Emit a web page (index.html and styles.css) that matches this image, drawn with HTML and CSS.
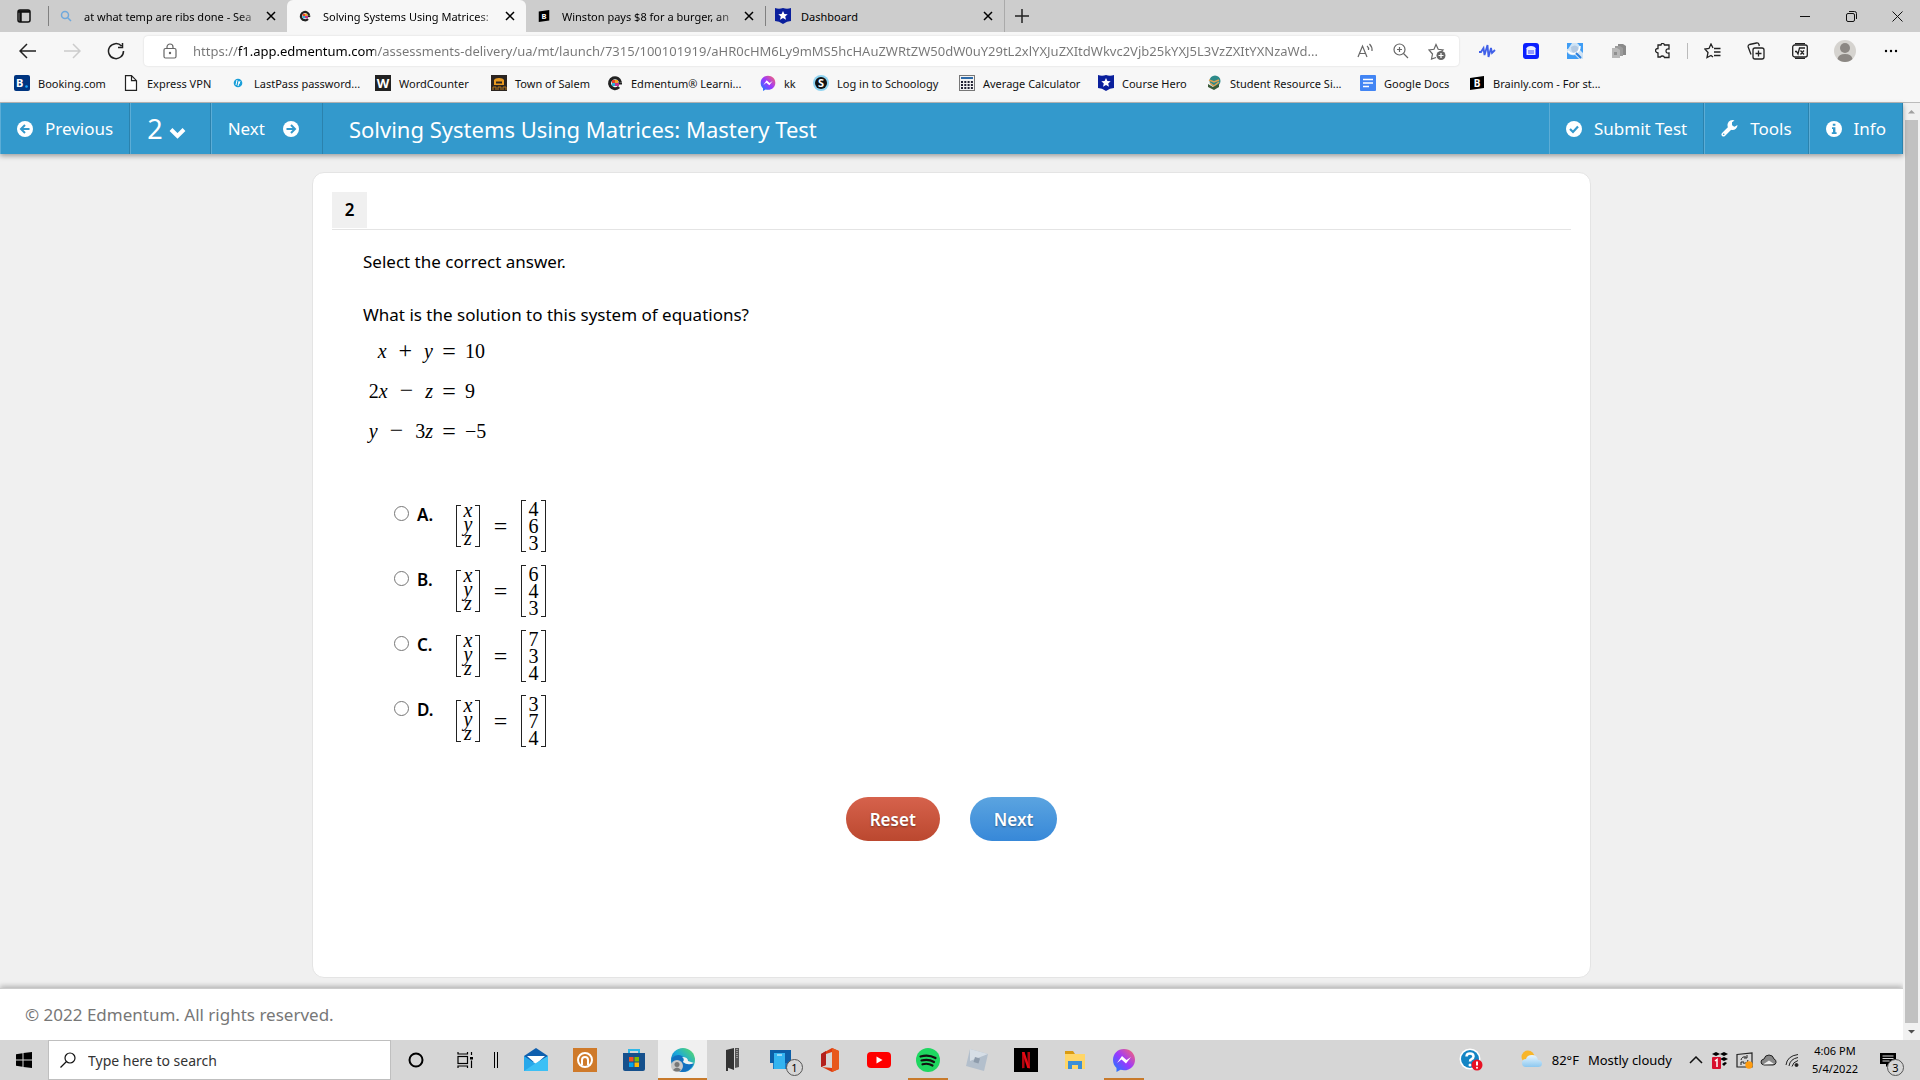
FILE: index.html
```
<!DOCTYPE html>
<html lang="en">
<head>
  <meta charset="UTF-8" />
  <meta name="viewport" content="width=device-width, initial-scale=1.0"/>
  <title>Solving Systems Using Matrices: Mastery Test</title>
  <link rel="stylesheet" href="styles.css">
</head>
<body>
  <!-- Shared icons -->
  <svg class="sprite" aria-hidden="true">
    <symbol id="i-close" viewBox="0 0 12 12"><path d="M2 2l8 8M10 2l-8 8" stroke="currentColor" stroke-width="1.5" fill="none"/></symbol>
    <symbol id="i-edmentum" viewBox="0 0 16 16">
      <path d="M13.500 7.500a5.500 5.500 0 1 0-1.500 4.500" fill="none" stroke="#222" stroke-width="3"/>
      <path d="M5 8.500h10" stroke="#222" stroke-width="2"/>
      <path d="M5 5h3v3H5z" fill="#e8432e"/><path d="M8 5h3v3H8z" fill="#f5a623"/><path d="M5 8h3v3H5z" fill="#2bb3d6"/><path d="M8 8h4v3H8z" fill="#c2378f"/>
    </symbol>
    <symbol id="i-hero" viewBox="0 0 16 16"><path d="M0 0q4 1.500 8 0 4 1.500 8 0v13q-4 0-8 3-4-3-8-3z" fill="#0a1f9c"/><path d="M8 3l1.400 3 3.300.3-2.500 2.200.8 3.300L8 10l-3 1.800.8-3.300-2.500-2.200 3.300-.3z" fill="#fff"/></symbol>
    <symbol id="i-messenger" viewBox="0 0 24 24">
      <path d="M12 1C5.500 1 1 5.800 1 12c0 3.300 1.300 6 3.500 7.900V24l4-2.200c1.100.3 2.300.5 3.500.5 6.500 0 11-4.600 11-10.600S18.500 1 12 1z" fill="url(#g-msg)"/>
      <path d="M5 15l5-7 4.500 4L19 9l-5 6.500-4.500-4z" fill="#fff"/>
    </symbol>
    <defs>
      <linearGradient id="g-msg" x1="0" y1="1" x2="1" y2="0"><stop offset="0" stop-color="#0a84ff"/><stop offset=".5" stop-color="#9b38ff"/><stop offset="1" stop-color="#ff6968"/></linearGradient>
      <linearGradient id="g-edge" x1="0" y1="1" x2="1" y2="0"><stop offset="0" stop-color="#0c59a4"/><stop offset=".5" stop-color="#1ba8dc"/><stop offset="1" stop-color="#5fe05a"/></linearGradient>
      <linearGradient id="g-cloud" x1="0" y1="0" x2="0" y2="1"><stop offset="0" stop-color="#e9f6ff"/><stop offset="1" stop-color="#8cc8f0"/></linearGradient>
    </defs>
  </svg>

  <!-- Browser tabs -->
  <div class="tabstrip">
    <button class="tab-actions" aria-label="Tab actions"><svg width="16" height="16" viewBox="0 0 16 16"><rect x="2" y="2" width="12" height="12" rx="2" fill="none" stroke="#111" stroke-width="1.500"/><path d="M2 3.500h12M4.500 3v11" stroke="#111" stroke-width="2.500"/></svg></button>
    <div class="tab tab-line">
      <svg class="tab-icon" viewBox="0 0 12 12"><circle cx="5" cy="5" r="3.500" fill="none" stroke="#6fa8dc" stroke-width="1.500"/><path d="M7.500 7.500L11 11" stroke="#6fa8dc" stroke-width="1.500"/></svg>
      <span class="tab-title faded">at what temp are ribs done - Sea</span>
      <button class="tab-close" aria-label="Close tab"><svg width="12" height="12"><use href="#i-close"/></svg></button>
    </div>
    <div class="tab active">
      <svg class="tab-icon"><use href="#i-edmentum"/></svg>
      <span class="tab-title faded">Solving Systems Using Matrices:</span>
      <button class="tab-close" aria-label="Close tab"><svg width="12" height="12"><use href="#i-close"/></svg></button>
    </div>
    <div class="tab">
      <svg class="tab-icon" viewBox="0 0 16 16"><path d="M1 2l14-2v14L1 16z" fill="#000"/><text x="8" y="12" font-size="10" font-weight="700" text-anchor="middle" fill="#fff">B</text></svg>
      <span class="tab-title faded">Winston pays $8 for a burger, an</span>
      <button class="tab-close" aria-label="Close tab"><svg width="12" height="12"><use href="#i-close"/></svg></button>
    </div>
    <div class="tab tab-line">
      <svg class="tab-icon big"><use href="#i-hero"/></svg>
      <span class="tab-title">Dashboard</span>
      <button class="tab-close" aria-label="Close tab"><svg width="12" height="12"><use href="#i-close"/></svg></button>
    </div>
    <button class="new-tab" aria-label="New tab"><svg width="14" height="14" viewBox="0 0 14 14"><path d="M7 0v14M0 7h14" stroke="#222" stroke-width="1.500"/></svg></button>
    <div class="window-controls">
      <button aria-label="Minimize"><svg width="10" height="10" viewBox="0 0 10 10"><path d="M0 5.500h10" stroke="#111"/></svg></button>
      <button aria-label="Restore"><svg width="11" height="11" viewBox="0 0 11 11" fill="none" stroke="#111"><rect x=".5" y="2.500" width="8" height="8" rx="1.500"/><path d="M3 .5h5.500q2 0 2 2V8"/></svg></button>
      <button aria-label="Close"><svg width="11" height="11" viewBox="0 0 11 11"><path d="M.5.500l10 10M10.500.500l-10 10" stroke="#111"/></svg></button>
    </div>
  </div>

  <!-- Address bar -->
  <div class="toolbar">
    <div class="nav-buttons">
      <button aria-label="Back"><svg width="18" height="16" viewBox="0 0 18 16" fill="none" stroke="#222" stroke-width="1.500"><path d="M17 8H1.500M8 1L1 8l7 7"/></svg></button>
      <button aria-label="Forward" disabled><svg width="18" height="16" viewBox="0 0 18 16" fill="none" stroke="#ccc" stroke-width="1.500"><path d="M1 8h15.500M10 1l7 7-7 7"/></svg></button>
      <button aria-label="Refresh"><svg width="18" height="18" viewBox="0 0 18 18" fill="none" stroke="#222" stroke-width="1.500"><path d="M16.500 9A7.500 7.500 0 1 1 14.500 4M15.500 1v4.500H11"/></svg></button>
    </div>
    <div class="address">
      <svg width="14" height="16" viewBox="0 0 14 16" fill="none" stroke="#666" stroke-width="1.200"><rect x="1" y="5.500" width="12" height="9.500" rx="1.500"/><path d="M4 5.500V4a3 3 0 0 1 6 0v1.500"/><circle cx="7" cy="10" r=".6" fill="#666"/></svg>
      <input class="url" type="text" aria-label="Address" value="https://f1.app.edmentum.com/assessments-delivery/ua/mt/launch/7315/100101919/aHR0cHM6Ly9mMS5hcHAuZWRtZW50dW0uY29tL2xlYXJuZXItdWkvc2Vjb25kYXJ5L3VzZXItYXNzaWd...">
      <div class="address-icons">
        <button aria-label="Read aloud"><svg width="17" height="16" viewBox="0 0 17 16" fill="none" stroke="#666" stroke-width="1.200"><path d="M1 14L5.500 3 10 14M2.500 10.500h6M10 3q2 1.500 1.500 4M12.500 1q3 3 2.500 7"/></svg></button>
        <button aria-label="Zoom"><svg width="16" height="16" viewBox="0 0 16 16" fill="none" stroke="#666" stroke-width="1.200"><circle cx="6.500" cy="6.500" r="5.500"/><path d="M10.500 10.500L15 15M4 6.500h5M6.500 4v5"/></svg></button>
        <button aria-label="Add to favorites"><svg width="18" height="17" viewBox="0 0 18 17" fill="none" stroke="#666" stroke-width="1.200"><path d="M8 14.500l-4.500 1.500 1-5L1 7l5-.7L8 1.500l2.200 4.800 4.800.7-2 2"/><circle cx="13" cy="12.500" r="4.500" fill="#666" stroke="none"/><path d="M13 10v5M10.500 12.500h5" stroke="#fff"/></svg></button>
      </div>
    </div>
    <div class="extensions">
      <button aria-label="Speechify"><svg width="18" height="16" viewBox="0 0 18 16"><path d="M1 9h2L5.500 5l1 7L9.500 2l1 12 2.500-9 1 5 3-3" fill="none" stroke="#4060e8" stroke-width="1.800"/></svg></button>
      <button aria-label="Honey"><svg width="16" height="16" viewBox="0 0 16 16"><rect width="16" height="16" rx="3" fill="#0a20ff"/><path d="M3 6q1-3 5-3t5 3zM3.500 6h9v6h-9z" fill="#e8ecff"/><path d="M6 7v4M8 7v4M10 7v4" stroke="#0a20ff" stroke-width=".8"/></svg></button>
      <button aria-label="Extension"><svg width="16" height="16" viewBox="0 0 16 16"><path d="M0 0h16v16H0z" fill="#cfe3f5"/><path d="M0 0h5L1 6H0zM10 0h6v10l-3-3q1-4-3-7zM0 9q3 4 8 3l4 4H0z" fill="#3f9df5"/><path d="M4 4q4-3 7 0 1 5-3 6-4 0-4-6z" fill="#b3c9e2"/><path d="M1 8q3 4 8 2 4-2 4-7" fill="none" stroke="#fff" stroke-width="1.500"/><path d="M9 10l5 5" stroke="#2b7fdc" stroke-width="2"/></svg></button>
      <button aria-label="Documents"><svg width="16" height="16" viewBox="0 0 16 16"><path d="M7 1h5l3 2v9H7z" fill="#8a8a8a"/><path d="M4 3h5l3 2v8H4z" fill="#9c9c9c"/><path d="M1 5h5l3 2v8H1z" fill="#b8b8b8"/><path d="M3 9h3v3H3z" fill="#909090"/></svg></button>
      <button aria-label="Extensions"><svg width="16" height="16" viewBox="0 0 16 16" fill="none" stroke="#222" stroke-width="1.300"><path d="M3 2h3q.5-2 2-1.500T9.500 2H14v4q-3-.5-3 2t3 2v4.500H9.500q-.5-1.500-2-1.500T5.500 14H3v-4Q.5 9.500.5 7.500T3 5.500z"/></svg></button>
      <span class="divider"></span>
      <button aria-label="Favorites"><svg width="17" height="16" viewBox="0 0 17 16" fill="none" stroke="#222" stroke-width="1.300"><path d="M9 5L7 1 5 5.500.8 6 4 9.500 3 14.500 7 12.500 9 14M10 5.500h6.500M10 9h6.500M10 12.500h6.500"/></svg></button>
      <button aria-label="Collections"><svg width="18" height="18" viewBox="0 0 18 18" fill="none" stroke="#222" stroke-width="1.300"><rect x="6" y="6" width="11" height="11" rx="2"/><path d="M11.500 8.500v6M8.500 11.500h6M4 12.500L1.200 5Q.8 3 2.500 2.500L9.500 1q2-.3 2.500 1.500l.3 1.500"/></svg></button>
      <button aria-label="Math solver"><svg width="16" height="16" viewBox="0 0 16 16" fill="none" stroke="#222" stroke-width="1.300"><rect x=".7" y="2" width="14.600" height="12" rx="2"/><path d="M3 .7h10M3 15.300h10M3 8.500h1.500L6 11l1.500-6H13M8.500 7.500l3.500 4M12 7.500l-3.500 4"/></svg></button>
      <button class="wide" aria-label="Profile"><svg width="22" height="22" viewBox="0 0 22 22"><circle cx="11" cy="11" r="11" fill="#d5d3cf"/><circle cx="11" cy="8" r="5" fill="#8c8884"/><path d="M3.500 19q1-5 7.500-5t7.500 5q-3 3-7.500 3t-7.500-3z" fill="#8c8884"/></svg></button>
      <button class="wide" aria-label="Settings and more"><svg width="14" height="4" viewBox="0 0 14 4"><circle cx="2" cy="2" r="1.200"/><circle cx="7" cy="2" r="1.200"/><circle cx="12" cy="2" r="1.200"/></svg></button>
    </div>
  </div>

  <!-- Favorites bar -->
  <nav class="bookmarks">
    <a href="#"><svg viewBox="0 0 16 16"><rect width="16" height="16" rx="2" fill="#003580"/><text x="2" y="12" font-size="11" font-weight="700" fill="#fff">B</text><circle cx="12.500" cy="11.500" r="1.300" fill="#19a7ff"/></svg>Booking.com</a>
    <a href="#"><svg viewBox="0 0 16 16"><path d="M2.500.7h6l5 5v9.600h-11zM8.500.7v5h5" fill="#fff" stroke="#222" stroke-width="1.200"/></svg>Express VPN</a>
    <a href="#"><svg viewBox="0 0 16 16"><circle cx="8" cy="8" r="4.300" fill="#1a9fd9"/><path d="M7 5L6 10M8 7h1l-1 4M10 6L9 9" stroke="#fff" fill="none"/></svg>LastPass password...</a>
    <a href="#"><svg viewBox="0 0 16 16"><rect width="16" height="16" fill="#222"/><text x="8" y="13" font-size="13" font-weight="700" text-anchor="middle" fill="#fff">W</text></svg>WordCounter</a>
    <a href="#"><svg viewBox="0 0 16 16"><rect width="16" height="16" fill="#2b2420"/><path d="M3 5q1-2 5-2t5 2v5H3z" fill="#e89a22"/><path d="M5 6.500h6v2H5z" fill="#2b2420"/><path d="M2 15v-3h3v3M7 15v-3h3v3M12 15v-3h3v3" stroke="#b5761c" fill="none"/></svg>Town of Salem</a>
    <a href="#"><svg><use href="#i-edmentum"/></svg>Edmentum® Learni...</a>
    <a href="#"><svg><use href="#i-messenger"/></svg>kk</a>
    <a href="#"><svg viewBox="0 0 16 16"><circle cx="8" cy="8" r="8" fill="#8fd4f2"/><circle cx="8" cy="8" r="6" fill="#111"/><text x="8" y="12" font-size="11" font-weight="700" text-anchor="middle" fill="#fff">S</text></svg>Log in to Schoology</a>
    <a href="#"><svg viewBox="0 0 16 16"><rect x=".5" y=".5" width="15" height="15" fill="#f2f2f2" stroke="#777"/><path d="M2 3h12" stroke="#2d6aa8" stroke-width="2"/><path d="M2 7h12M2 10h12M2 13h12" stroke="#223" stroke-width="2" stroke-dasharray="2 1.300"/></svg>Average Calculator</a>
    <a href="#"><svg><use href="#i-hero"/></svg>Course Hero</a>
    <a href="#"><svg viewBox="0 0 16 16"><circle cx="9" cy="6" r="5.500" fill="#2d8a8a"/><path d="M3 5l5 2 5-2M4 8l4 3 5-4" stroke="#e0a050" stroke-width="1.500" fill="none"/><path d="M2 9l5 3 6-3v3l-5 3-6-3z" fill="#3a5a38"/></svg>Student Resource Si...</a>
    <a href="#"><svg viewBox="0 0 16 16"><rect width="16" height="16" rx="1" fill="#4285f4"/><path d="M3 4.500h10M3 8h10M3 11.500h6" stroke="#fff" stroke-width="1.500"/></svg>Google Docs</a>
    <a href="#"><svg viewBox="0 0 16 16"><path d="M1 3l14-2v12L1 15z" fill="#000"/><text x="8" y="12" font-size="10" font-weight="700" text-anchor="middle" fill="#fff">B</text></svg>Brainly.com - For st...</a>
  </nav>

  <!-- Test page -->
  <div class="viewport">
    <div class="page">
      <header class="test-bar">
        <button class="bar-btn"><svg width="16" height="16" viewBox="0 0 16 16"><circle cx="8" cy="8" r="8" fill="#fff"/><path d="M12.500 8H4.500M8 4L4 8l4 4" fill="none" stroke="#39c" stroke-width="2"/></svg>Previous</button>
        <button class="bar-btn question-menu">2<svg width="17" height="12" viewBox="0 0 17 12"><path d="M2 2.500l6.500 6.500L15 2.500" fill="none" stroke="#fff" stroke-width="4"/></svg></button>
        <button class="bar-btn next-btn">Next<svg width="16" height="16" viewBox="0 0 16 16"><circle cx="8" cy="8" r="8" fill="#fff"/><path d="M3.500 8h8M8 4l4 4-4 4" fill="none" stroke="#39c" stroke-width="2"/></svg></button>
        <h1>Solving Systems Using Matrices: Mastery Test</h1>
        <button class="bar-btn"><svg width="16" height="16" viewBox="0 0 16 16"><circle cx="8" cy="8" r="8" fill="#fff"/><path d="M4 8l3 3 5-5.500" fill="none" stroke="#39c" stroke-width="2.200"/></svg>Submit Test</button>
        <button class="bar-btn"><svg width="17" height="17" viewBox="0 0 17 17"><path d="M2.500 14.500L10 7" stroke="#fff" stroke-width="4" stroke-linecap="round"/><path d="M13.500.500a5 5 0 1 0 3 4.500l-3 1.800-2.500-1.300V2.200z" fill="#fff"/><circle cx="2.700" cy="14.300" r=".8" fill="#39c"/></svg>Tools</button>
        <button class="bar-btn"><svg width="16" height="16" viewBox="0 0 16 16"><circle cx="8" cy="8" r="8" fill="#fff"/><path d="M6.800 2.800h2.600v2H6.800zM6 6.300h3.400v5h1.200v1.700H5.800v-1.700H7V8H6z" fill="#39c"/></svg>Info</button>
      </header>

      <main>
        <form class="card">
          <div class="card-head"><span class="number">2</span></div>
          <div class="question">
            <p class="direction">Select the correct answer.</p>
            <p>What is the solution to this system of equations?</p>
            <div class="equations">
              <span class="lhs"><i>x</i><b>+</b><i>y</i></span><span class="eq">=</span><span>10</span>
              <span class="lhs">2<i>x</i><b>−</b><i>z</i></span><span class="eq">=</span><span>9</span>
              <span class="lhs"><i>y</i><b>−</b>3<i>z</i></span><span class="eq">=</span><span>−5</span>
            </div>
            <div class="options">
              <label class="option"><input type="radio" name="answer" value="A"><span class="letter">A.</span>
                <span class="math"><span class="matrix vars"><i>x</i><i>y</i><i>z</i></span><span class="eq">=</span><span class="matrix"><span>4</span><span>6</span><span>3</span></span></span></label>
              <label class="option"><input type="radio" name="answer" value="B"><span class="letter">B.</span>
                <span class="math"><span class="matrix vars"><i>x</i><i>y</i><i>z</i></span><span class="eq">=</span><span class="matrix"><span>6</span><span>4</span><span>3</span></span></span></label>
              <label class="option"><input type="radio" name="answer" value="C"><span class="letter">C.</span>
                <span class="math"><span class="matrix vars"><i>x</i><i>y</i><i>z</i></span><span class="eq">=</span><span class="matrix"><span>7</span><span>3</span><span>4</span></span></span></label>
              <label class="option"><input type="radio" name="answer" value="D"><span class="letter">D.</span>
                <span class="math"><span class="matrix vars"><i>x</i><i>y</i><i>z</i></span><span class="eq">=</span><span class="matrix"><span>3</span><span>7</span><span>4</span></span></span></label>
            </div>
          </div>
          <div class="actions">
            <button type="reset" class="pill red">Reset</button>
            <button type="submit" class="pill blue">Next</button>
          </div>
        </form>
      </main>

      <footer>© 2022 Edmentum. All rights reserved.</footer>
    </div>
    <div class="scrollbar">
      <svg viewBox="0 0 17 17"><path d="M5 10.500h7L8.500 7z" fill="#a0a0a0"/></svg>
      <div class="thumb"></div>
      <svg viewBox="0 0 17 17"><path d="M5 7h7l-3.500 3.500z" fill="#505050"/></svg>
    </div>
  </div>

  <!-- Windows taskbar -->
  <div class="taskbar">
    <button class="start" aria-label="Start"><svg width="16" height="16" viewBox="0 0 16 16"><path d="M0 2.200L6.500 1.300v6.200H0zM7.500 1.100L16 0v7.500H7.500zM0 8.500h6.500v6.200L0 13.800zM7.500 8.500H16V16l-8.500-1.100z"/></svg></button>
    <div class="search">
      <svg width="16" height="16" viewBox="0 0 16 16" fill="none" stroke="#111" stroke-width="1.200"><circle cx="10" cy="6" r="5"/><path d="M6.500 9.500L.5 15.500"/></svg>
      <input type="text" aria-label="Search" placeholder="Type here to search">
    </div>
    <div class="apps">
      <button aria-label="Cortana"><svg width="16" height="16" viewBox="0 0 16 16"><circle cx="8" cy="8" r="6.500" fill="none" stroke="#000" stroke-width="2"/></svg></button>
      <button aria-label="Task view"><svg width="16" height="16" viewBox="0 0 16 16" fill="none" stroke="#000" stroke-width="1.200"><rect x="1" y="4.500" width="9.500" height="7"/><path d="M1 0v2h9.500V0M1 16v-2h9.500v2M14.500 0v3M14.500 8.500V16"/><path d="M13 5h3v2.500h-3z" fill="#000" stroke="none"/></svg></button>
      <span class="grip"></span>
      <button aria-label="Mail"><svg width="24" height="24" viewBox="0 0 24 24"><path d="M0 8l12-8 12 8v6H0z" fill="#0f5fae"/><path d="M3 8h18l-9 8z" fill="#fff"/><path d="M0 8l12 8 12-8v15H0z" fill="#28a8ea"/><path d="M0 23L12 15 24 8v15z" fill="#3cc0f5"/></svg></button>
      <button aria-label="Audio"><svg width="24" height="24" viewBox="0 0 24 24"><path d="M0 0h24v24H0z" fill="#cf7a2a"/><circle cx="12" cy="12" r="7" fill="none" stroke="#fff" stroke-width="2"/><path d="M9 17v-5a3 3 0 0 1 6 0v5" fill="none" stroke="#fff" stroke-width="2"/></svg></button>
      <button aria-label="Store"><svg width="24" height="24" viewBox="0 0 24 24"><path d="M7 6V2h10v4" fill="none" stroke="#2fb8e8" stroke-width="2"/><path d="M1 5h22v16q0 2-2 2H3q-2 0-2-2z" fill="#15508c"/><path d="M7 9h4.500v4.500H7z" fill="#f25022"/><path d="M12.500 9H17v4.500h-4.500z" fill="#7fba00"/><path d="M7 14.500h4.500V19H7z" fill="#00a4ef"/><path d="M12.500 14.500H17V19h-4.500z" fill="#ffb900"/></svg></button>
      <button class="current" aria-label="Edge"><svg width="24" height="24" viewBox="0 0 24 24"><circle cx="12" cy="12" r="12" fill="url(#g-edge)"/><path d="M1 10q5-5 10-2 3 2 1 6 3 4 11 1-4 9-12 9Q3 23 1 10z" fill="#1370c0"/><path d="M12 14q2-3-1-5 6 0 6 4l6 2q-6 3-11-1z" fill="#f2f2f2"/><circle cx="6" cy="18" r="6" fill="#c9c9c9"/><circle cx="6" cy="16.500" r="2.500" fill="#777"/><path d="M2 22q4-5 8 0-4 3-8 0z" fill="#777"/></svg></button>
      <button aria-label="Server"><svg width="16" height="24" viewBox="0 0 16 24"><path d="M2 2l8-2v22l-8-3z" fill="#333"/><path d="M11 0h4v19l-4 1z" fill="#555"/><path d="M13 1v10" stroke="#ddd" stroke-dasharray="1 1"/><path d="M3 19v4" stroke="#333" stroke-width="2"/></svg></button>
      <button class="badged" aria-label="Your phone"><svg width="24" height="24" viewBox="0 0 24 24"><path d="M1 2h21v13H1z" fill="#0c5fa8"/><path d="M4 15h16v6H4z" fill="#1a7cc8"/><path d="M5 5h11v16H5z" fill="#33b4f0"/><path d="M8 7h5" stroke="#fff"/></svg><span class="badge">1</span></button>
      <button aria-label="Office"><svg width="20" height="24" viewBox="0 0 20 24"><path d="M1 6L12 0l7 3v18l-7 3-10-5 10 1V4L6 6v11l-5 2z" fill="#dc3b12"/><path d="M12 0l7 3v18l-7 3z" fill="#e8581c"/><path d="M1 6l5-3v14l-5 2z" fill="#b3201c"/></svg></button>
      <button aria-label="YouTube"><svg width="24" height="24" viewBox="0 0 24 24"><rect y="4" width="24" height="16" rx="4" fill="#f00"/><path d="M9.500 8.500l6 3.500-6 3.500z" fill="#fff"/></svg></button>
      <button class="open" aria-label="Spotify"><svg width="24" height="24" viewBox="0 0 24 24"><circle cx="12" cy="12" r="12" fill="#1ed760"/><path d="M4.500 8.500q8-2.500 15 1.500M5.500 12.500q7-2 12.500 1.500M6.500 16.300q5.500-1.500 10 1.200" fill="none" stroke="#111" stroke-width="2.200" stroke-linecap="round"/></svg></button>
      <button aria-label="Roblox"><svg width="24" height="24" viewBox="0 0 24 24"><path d="M5 1l18 5-4 17L1 18z" fill="#b3bfcc"/><path d="M5 1l18 5-18 7z" fill="#d6dee6"/><path d="M10 9l5 1.500-1.500 5-5-1.500z" fill="#8e9cac"/></svg></button>
      <button aria-label="Netflix"><svg width="24" height="24" viewBox="0 0 24 24"><path d="M0 0h24v24H0z"/><path d="M8 4h2.500v16L8 20.300zM13.500 4H16v16.300l-2.500-.3z" fill="#b1060f"/><path d="M8 4h2.500L16 20.300l-2.700-.3z" fill="#e50914"/></svg></button>
      <button aria-label="File Explorer"><svg width="24" height="24" viewBox="0 0 24 24"><path d="M2 3h8l2 3H2z" fill="#d99b12"/><path d="M2 6h20v15H2z" fill="#ffd667"/><path d="M5 21v-8h14v8h-4v-4H9v4z" fill="#3c8fd6"/></svg></button>
      <button class="open" aria-label="Messenger"><svg width="24" height="24"><use href="#i-messenger"/></svg></button>
    </div>
    <div class="tray">
      <button class="help" aria-label="Help"><svg width="24" height="24" viewBox="0 0 24 24"><circle cx="11" cy="11" r="10.500" fill="#fff"/><circle cx="11" cy="11" r="9" fill="#1485c4"/><path d="M7.500 8.500q0-3 3.500-3t3.500 3q0 1.800-2 2.600-1.500.6-1.500 2.400" fill="none" stroke="#fff" stroke-width="2.500"/><circle cx="11" cy="17" r="1.500" fill="#fff"/><circle cx="18" cy="17" r="5.500" fill="#e81123"/><path d="M18 13.500v4" stroke="#fff" stroke-width="2"/><circle cx="18" cy="19.700" r="1" fill="#fff"/></svg></button>
      <button class="weather"><svg width="22" height="20" viewBox="0 0 22 20"><circle cx="7" cy="7" r="6.500" fill="#f8b62a"/><path d="M5 17q-4 0-4-4t4-4q1-4 6-4t6 5q4 0 4 3.500T17 17z" fill="url(#g-cloud)"/></svg><span>82°F</span><span>Mostly cloudy</span></button>
      <div class="tray-icons">
        <button aria-label="Show hidden icons"><svg width="14" height="8" viewBox="0 0 14 8"><path d="M1 7l6-6 6 6" fill="none" stroke="#111" stroke-width="1.500"/></svg></button>
        <button aria-label="Dropbox"><svg width="16" height="17" viewBox="0 0 16 17"><path d="M4 0l4 2-4 2-4-2zM12 0l4 2-4 2-4-2zM12 5l4 2-4 2-4-2z"/><path d="M10 12l3-2 2 1-3 3z"/><rect y="5" width="9" height="12" rx="1" fill="#d8102e"/><path d="M3 9l2-1.500V15" fill="none" stroke="#fff" stroke-width="1.500"/></svg></button>
        <button aria-label="Sync"><svg width="17" height="17" viewBox="0 0 17 17"><path d="M1 2.500L16 1v14H1z" fill="none" stroke="#222" stroke-width="1.200"/><path d="M5 8q1-4 5-3M11 3v3H8M12 8q-1 4-5 3M5 13v-3h3" fill="none" stroke="#222"/><circle cx="13" cy="13" r="3.700" fill="#ff9c10"/></svg></button>
        <button aria-label="OneDrive"><svg width="17" height="12" viewBox="0 0 17 12"><path d="M4 11Q1 10.500 1 8t3-3q1-4 5-4t5 4q2.500 1 2 3.500T13 11z" fill="#888" stroke="#222"/><path d="M3 10.500l6-4 5 3.500z" fill="#eee"/></svg></button>
        <button aria-label="Network"><svg width="14" height="14" viewBox="0 0 14 14" fill="none" stroke="#222"><path d="M1 12Q2 3 13 1.500M4 13Q5 6 13 4.500M7 13.500Q8 9 13 7.500"/><circle cx="11.500" cy="12" r="1.500" fill="#222"/></svg></button>
      </div>
      <button class="clock"><span>4:06 PM</span><span>5/4/2022</span></button>
      <button class="notifications badged" aria-label="Notifications"><svg width="16" height="16" viewBox="0 0 16 16"><path d="M0 1h16v11h-7l-3 3v-3H0z"/><path d="M2.500 4h11M2.500 6.500h11M2.500 9h7" stroke="#d6d6d6"/></svg><span class="badge">3</span></button>
    </div>
  </div>
</body>
</html>
```
FILE: styles.css
```
* {
  box-sizing: border-box;
}

body {
  margin: 0;
  height: 100vh;
  display: flex;
  flex-direction: column;
  font-family: "Noto Sans", "Open Sans", sans-serif;
  font-size: 11px;
  color: #000;
  background: #f7f7f7;
  overflow: hidden;
}

button {
  display: flex;
  align-items: center;
  justify-content: center;
  padding: 0;
  border: none;
  background: none;
  font-family: inherit;
  font-size: inherit;
  color: inherit;
  cursor: pointer;
}

input {
  font-family: inherit;
}

svg {
  flex-shrink: 0;
}

.sprite {
  position: absolute;
  width: 0;
  height: 0;
}

/* tabs */
.tabstrip {
  display: flex;
  height: 32px;
  background: #cdcdcd;
}

.tab-actions {
  width: 48px;
}

.tab {
  display: flex;
  align-items: center;
  width: 239px;
  padding: 0 10px;
  position: relative;
}

.tab.active {
  background: #f7f7f7;
  border-radius: 6px 6px 0 0;
}

.tab-line::before {
  content: "";
  position: absolute;
  left: 0;
  width: 1px;
  height: 20px;
  background: #808080;
}

.tab-icon {
  width: 16px;
  height: 12px;
}

.tab-icon.big {
  height: 16px;
}

.tab-title {
  flex: 1;
  margin-left: 10px;
  white-space: nowrap;
}

.faded {
  -webkit-mask-image: linear-gradient(90deg, #000 88%, rgba(0, 0, 0, 0.2));
  mask-image: linear-gradient(90deg, #000 88%, rgba(0, 0, 0, 0.2));
}

.tab-close {
  width: 12px;
  height: 12px;
  margin-left: 6px;
}

.new-tab {
  width: 35px;
  border-left: 1px solid #aaa;
}

.window-controls {
  display: flex;
  margin-left: auto;
}

.window-controls button {
  width: 46px;
}

/* toolbar */
.toolbar {
  display: flex;
  align-items: center;
  height: 38px;
  padding-right: 6px;
}

.nav-buttons {
  display: flex;
  padding: 0 6px;
}

.nav-buttons button,
.extensions button {
  width: 44px;
  height: 30px;
}

.extensions .wide {
  width: 46px;
}

.address {
  flex: 1;
  display: flex;
  align-items: center;
  height: 30px;
  padding: 0 4px 0 19px;
  background: #fff;
  border-radius: 4px;
  box-shadow: 0 0 2px rgba(0, 0, 0, 0.15);
}

.url {
  flex: 1;
  min-width: 0;
  margin-left: 16px;
  padding: 0;
  border: none;
  outline: none;
  font-size: 13px;
  color: transparent;
  /* host name darker than the rest of the address */
  background: linear-gradient(90deg, #767676 46px, #000 46px, #000 181px, #767676 181px);
  -webkit-background-clip: text;
  background-clip: text;
}

.address-icons {
  display: flex;
}

.address-icons button {
  width: 36px;
}

.extensions {
  display: flex;
  align-items: center;
  margin-left: 6px;
}

.divider {
  width: 1px;
  height: 16px;
  margin: 0 2px;
  background: #bbb;
}

.bookmarks {
  display: grid;
  grid-template-columns: 109px 107px 145px 116px 116px 153px 53px 146px 139px 108px 154px 109px auto;
  align-items: center;
  height: 33px;
  padding: 0 14px 6px;
  border-bottom: 1px solid #bbb;
}

.bookmarks a {
  display: flex;
  align-items: center;
  gap: 8px;
  color: #111;
  text-decoration: none;
  white-space: nowrap;
}

.bookmarks svg {
  width: 16px;
  height: 16px;
}

/* test page */
.viewport {
  flex: 1;
  display: flex;
  min-height: 0;
}

.page {
  flex: 1;
  display: flex;
  flex-direction: column;
  background: #f0f0f0;
  font-size: 17px;
}

.test-bar {
  display: flex;
  height: 51px;
  background: #39c;
  color: #fff;
  box-shadow: 0 2px 5px rgba(0, 0, 0, 0.35);
  z-index: 1;
}

.bar-btn {
  gap: 12px;
  padding: 0 16px;
  border-left: 1px solid #5cadd6;
  border-right: 1px solid #2b82ad;
}

.question-menu {
  gap: 6px;
  padding: 0 24px 0 16px;
  font-size: 27px;
}

.question-menu svg {
  margin-top: 8px;
}

.next-btn {
  gap: 18px;
  padding-right: 23px;
}

.test-bar h1 {
  flex: 1;
  margin: 0;
  padding: 3px 0 0 26px;
  font-size: 22px;
  font-weight: 400;
  line-height: 46px;
}

main {
  flex: 1;
  padding: 18px 312px 10px;
}

.card {
  display: flex;
  flex-direction: column;
  height: 100%;
  padding: 19px;
  background: #fff;
  border: 1px solid #e4e4e4;
  border-radius: 12px;
}

.card-head {
  display: flex;
  padding-bottom: 1px;
  border-bottom: 1px solid #e4e4e4;
}

.number {
  width: 35px;
  background: #f0f0f0;
  font-weight: 600;
  line-height: 36px;
  text-align: center;
}

.question {
  padding: 19px 31px;
}

.question p {
  margin: 0;
  line-height: 26px;
}

.question .direction {
  margin-bottom: 27px;
}

.equations {
  display: grid;
  grid-template-columns: 70px 32px auto;
  margin-top: 3px;
  font-family: "Liberation Serif", serif;
  font-size: 20px;
  line-height: 40px;
}

.lhs {
  text-align: right;
}

.lhs b {
  margin: 0 12px;
  font-size: 24px;
  font-weight: 400;
  line-height: 1;
}

.eq {
  font-size: 24px;
  text-align: center;
}

.options {
  display: flex;
  flex-direction: column;
  gap: 13px;
  margin-top: 49px;
  padding-left: 31px;
}

.option {
  display: flex;
  align-items: flex-start;
  height: 52px;
}

.option input {
  width: 15px;
  height: 15px;
  margin: 6px 8px 0 0;
}

.letter {
  width: 39px;
  padding-top: 3px;
  font-weight: 600;
}

.math {
  display: flex;
  align-items: center;
  font-family: "Liberation Serif", serif;
}

.math .eq {
  width: 41px;
}

.matrix {
  display: flex;
  flex-direction: column;
  align-items: center;
  justify-content: center;
  width: 25px;
  height: 52px;
  font-size: 20px;
  line-height: 17px;
  /* square brackets */
  background:
    linear-gradient(#222, #222) 0 0 / 5px 1px,
    linear-gradient(#222, #222) 0 100% / 5px 1px,
    linear-gradient(#222, #222) 100% 0 / 5px 1px,
    linear-gradient(#222, #222) 100% 100% / 5px 1px,
    linear-gradient(#222, #222) 0 0 / 1px 100%,
    linear-gradient(#222, #222) 100% 0 / 1px 100%;
  background-repeat: no-repeat;
}

.matrix.vars {
  width: 24px;
  height: 42px;
  padding-bottom: 4px;
  line-height: 14px;
}

.actions {
  display: flex;
  justify-content: center;
  gap: 30px;
  margin-top: 31px;
}

.pill {
  height: 44px;
  padding: 0 24px;
  border-radius: 22px;
  color: #fff;
  font-weight: 600;
  text-shadow: 0 1px 2px rgba(0, 0, 0, 0.4);
}

.red {
  background: linear-gradient(#d6624c, #bb482f);
}

.blue {
  background: linear-gradient(#5ba4e0, #3788d8);
}

footer {
  height: 52px;
  padding-left: 25px;
  background: #fff;
  border-top: 1px solid #ccc;
  box-shadow: 0 -2px 5px rgba(0, 0, 0, 0.25);
  color: #777;
  line-height: 52px;
}

.scrollbar {
  display: flex;
  flex-direction: column;
  align-items: center;
  width: 17px;
  background: #f1f1f1;
}

.scrollbar svg {
  width: 17px;
  height: 17px;
}

.thumb {
  flex: 1;
  width: 13px;
  background: #c1c1c1;
}

/* taskbar */
.taskbar {
  display: flex;
  height: 40px;
  background: #d6d6d6;
}

.start {
  width: 48px;
}

.search {
  display: flex;
  align-items: center;
  gap: 12px;
  width: 343px;
  padding-left: 11px;
  background: #fff;
  border: 1px solid #bfbfbf;
}

.search input {
  flex: 1;
  min-width: 0;
  padding: 0;
  border: none;
  outline: none;
  font-size: 14px;
}

.search input::placeholder {
  color: #333;
}

.apps {
  display: flex;
}

.apps button {
  width: 49px;
}

.grip {
  width: 4px;
  height: 16px;
  margin: 12px 13px 0 5px;
  border-left: 1px solid #000;
  border-right: 1px solid #000;
}

.apps .current {
  background: #f0f0f0;
  box-shadow: inset 0 -2px #c87a2b;
}

.open {
  background: linear-gradient(#c87a2b, #c87a2b) center bottom / 40px 2px no-repeat;
}

.badged {
  position: relative;
}

.badge {
  position: absolute;
  right: 2px;
  bottom: 4px;
  width: 17px;
  height: 17px;
  border: 1px solid #555;
  border-radius: 50%;
  background: #d6d6d6;
  font-size: 11px;
  line-height: 15px;
  text-align: center;
}

.tray {
  display: flex;
  margin-left: auto;
}

.weather {
  gap: 9px;
  margin: 0 12px 0 38px;
  font-size: 13px;
}

.tray-icons {
  display: flex;
}

.tray-icons button {
  width: 24px;
}

.clock {
  flex-direction: column;
  width: 62px;
  line-height: 18px;
}

.notifications {
  width: 36px;
  margin: 0 14px 0 4px;
}
```
